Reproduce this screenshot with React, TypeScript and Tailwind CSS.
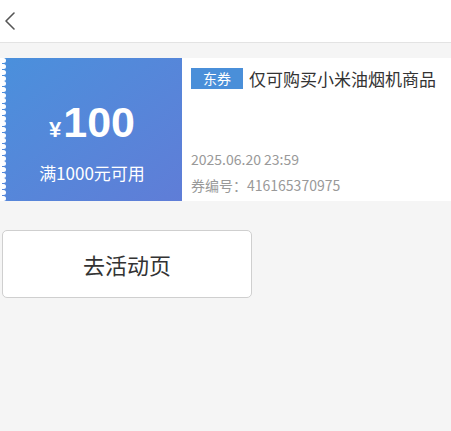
import React from 'react'

export default function App() {
  return (
    <div className="min-h-[431px] w-full bg-[#f5f5f5] font-['Noto_Sans_CJK_SC','Noto_Sans',sans-serif]">
      <div className="flex h-[43px] items-center border-b border-[#e3e3e3] bg-white px-[4px]">
        <svg viewBox="0 0 12 20" className="h-[20px] w-[12px]" fill="none">
          <path d="M10 2 2 10l8 8" stroke="#555" strokeWidth="1.6" strokeLinecap="round" strokeLinejoin="round" />
        </svg>
      </div>

      <div className="mt-[15px] flex h-[143px] bg-white pl-[2px]">
        <div className="relative flex w-[180px] flex-col items-center justify-center overflow-hidden bg-gradient-to-br from-[#4a90dc] to-[#5f7dd7] text-white">
          <div className="absolute left-0 top-0 flex h-full flex-col justify-around">
            {Array.from({ length: 25 }).map((_, i) => (
              <span key={i} className="-ml-[2px] block h-[5px] w-[6px] rounded-full bg-white" />
            ))}
          </div>
          <div className="mt-[22px] flex items-baseline font-['Liberation_Sans',sans-serif]">
            <span className="mr-[2px] text-[22px] font-bold">¥</span>
            <span className="text-[43px] font-bold leading-none">100</span>
          </div>
          <div className="mt-[18px] text-[17px] leading-none">满1000元可用</div>
        </div>
        <div className="flex flex-1 flex-col pl-[9px] pt-[8px]">
          <div className="flex items-center">
            <span className="flex h-[21px] w-[52px] items-center justify-center bg-[#4a8fd9] text-[14px] text-white">东券</span>
            <span className="ml-[6px] text-[17px] text-[#333]">仅可购买小米油烟机商品</span>
          </div>
          <div className="mt-auto pb-[3px] text-[14px] leading-[26px] text-[#999]">
            <div>2025.06.20 23:59</div>
            <div>券编号：416165370975</div>
          </div>
        </div>
      </div>

      <div className="mt-[29px] pl-[2px]">
        <button className="flex h-[68px] w-[250px] items-center justify-center rounded-[5px] border border-[#cfcfcf] bg-white text-[22px] text-[#333]">
          去活动页
        </button>
      </div>
    </div>
  )
}
